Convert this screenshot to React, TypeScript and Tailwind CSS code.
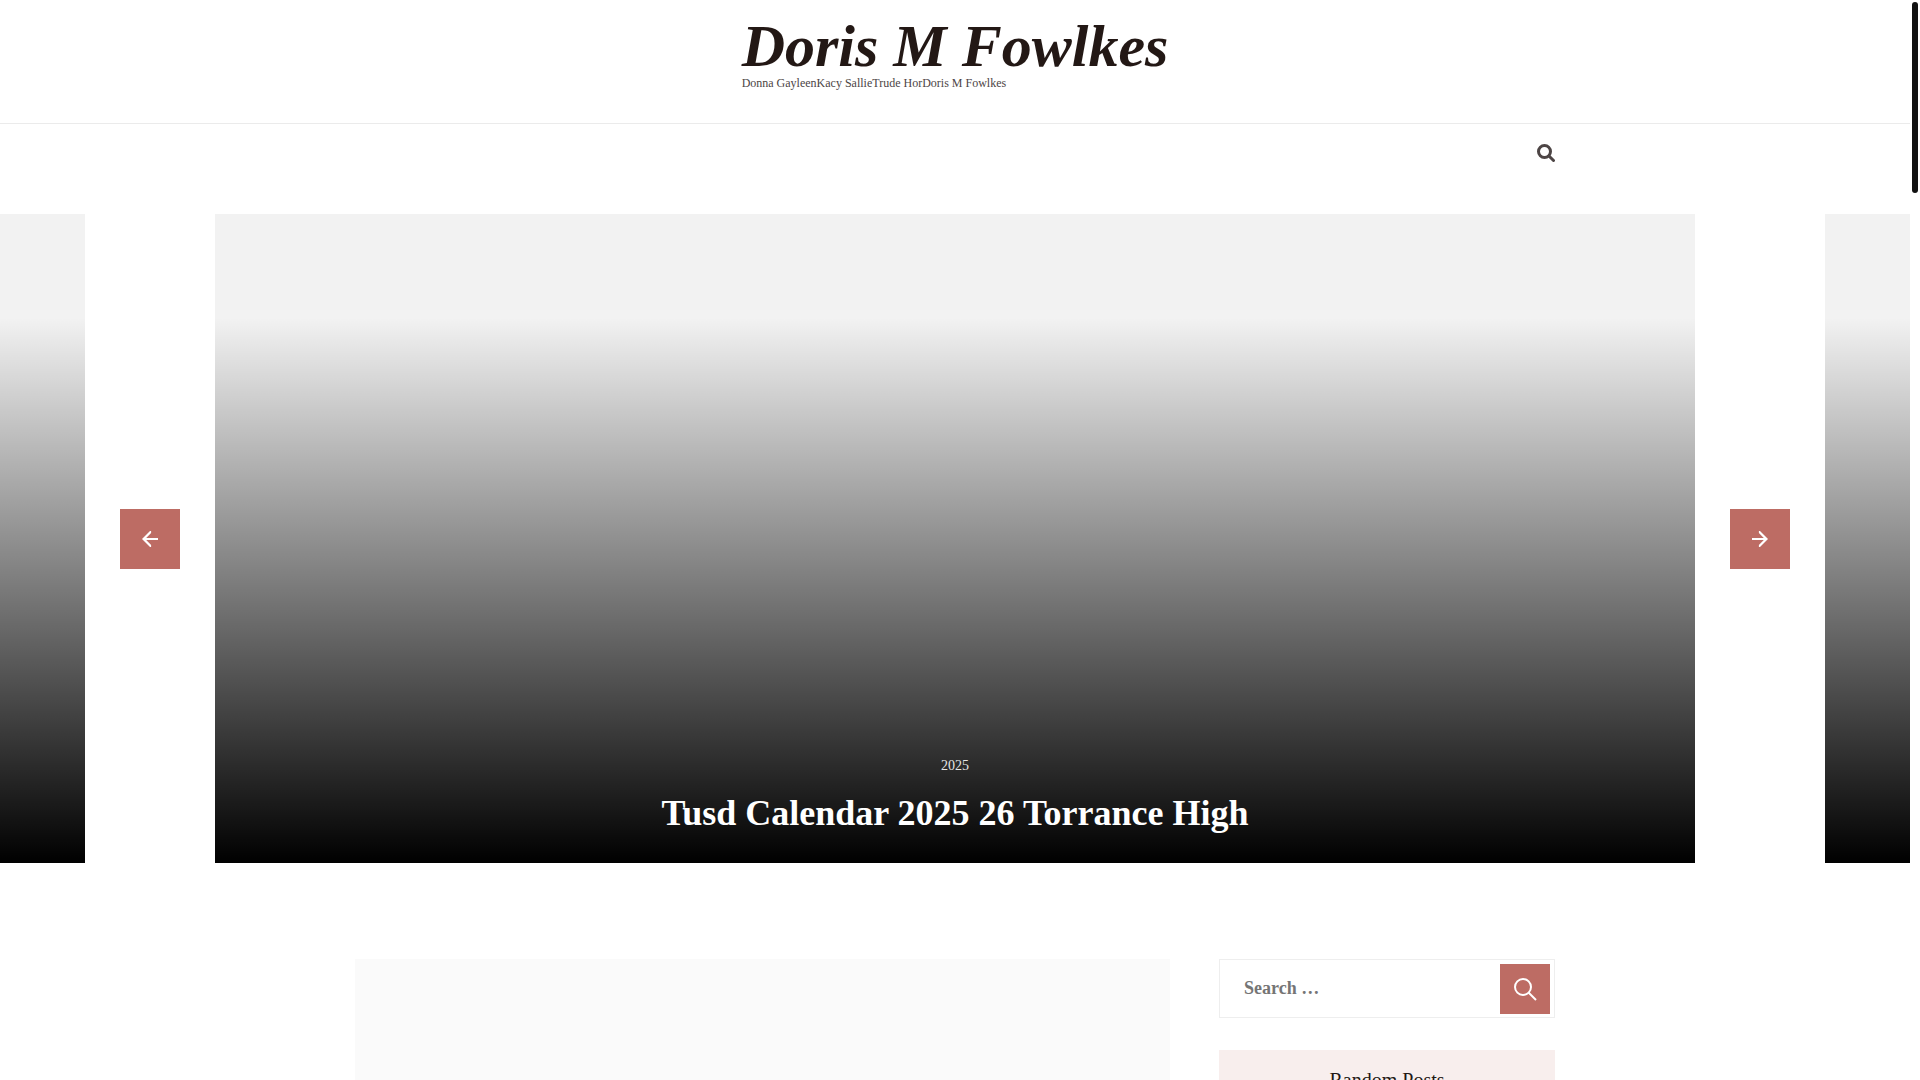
import { useState } from "react";

const slides = [
  { id: 1, category: "2025", title: "Calendar 2025 Printable Monthly" },
  { id: 2, category: "2025", title: "Tusd Calendar 2025 26 Torrance High" },
  { id: 3, category: "2025", title: "School Calendar 2025 Holidays" },
];

function SearchBoldIcon() {
  return (
    <svg width="18" height="18" viewBox="0 0 18 18" fill="none" stroke="currentColor" strokeWidth="3" aria-hidden="true">
      <circle cx="7.5" cy="7.5" r="6" />
      <path d="M12 12l4.5 4.5" strokeLinecap="round" />
    </svg>
  );
}

function SearchThinIcon() {
  return (
    <svg width="24" height="24" viewBox="0 0 24 24" fill="none" stroke="currentColor" strokeWidth="2" aria-hidden="true">
      <circle cx="10" cy="10" r="8" />
      <path d="M15.5 15.5L23 23" />
    </svg>
  );
}

function ArrowIcon({ direction }: { direction: "left" | "right" }) {
  return (
    <svg width="16" height="16" viewBox="0 0 16 16" fill="currentColor" aria-hidden="true">
      {direction === "left" ? (
        <path d="M16 7H4.2l4.9-4.9V0H8L0 8l8 8h1.1v-2.1L4.2 9H16z" />
      ) : (
        <path d="M0 7h11.8L6.9 2.1V0H8l8 8-8 8H6.9v-2.1L11.8 9H0z" />
      )}
    </svg>
  );
}

function Header() {
  return (
    <header>
      <div className="flex justify-center border-b border-[#ebebeb] pt-4 pb-8">
        <div>
          <h1 className="text-[60px] leading-[60px] font-bold italic">
            <a href="#home">Doris M Fowlkes</a>
          </h1>
          <p className="text-xs leading-[15px] text-[#4d4545]">Donna GayleenKacy SallieTrude HorDoris M Fowlkes</p>
        </div>
      </div>
      <nav className="mx-auto flex h-[90px] max-w-[1200px] items-start justify-end pt-5">
        <button type="button" aria-label="Open search" className="text-[#4d4545]">
          <SearchBoldIcon />
        </button>
      </nav>
    </header>
  );
}

function Slider() {
  const [active, setActive] = useState(1);
  const at = (offset: number) => slides[(active + offset + slides.length) % slides.length];
  const visible = [at(-1), at(0), at(1)];

  return (
    <section aria-label="Featured posts" className="relative overflow-hidden">
      <div className="flex justify-center gap-[130px]">
        {visible.map((slide, index) => (
          <article
            key={slide.id}
            className="flex h-[649px] w-[calc(100%-430px)] shrink-0 flex-col items-center justify-end bg-[#f2f2f2] bg-[linear-gradient(180deg,rgba(0,0,0,0)_16%,#000_100%)] pb-6 text-center text-white"
          >
            {index === 1 && (
              <>
                <a href="#category" className="text-sm leading-5 text-[#e6e6e6]">{slide.category}</a>
                <h2 className="mt-[11px] text-4xl leading-[52px] font-bold">
                  <a href="#post">{slide.title}</a>
                </h2>
              </>
            )}
          </article>
        ))}
      </div>
      <button
        type="button"
        aria-label="Previous slide"
        onClick={() => setActive((active + 2) % 3)}
        className="absolute top-[295px] left-[120px] flex size-[60px] items-center justify-center bg-[#bd6c64] text-white"
      >
        <ArrowIcon direction="left" />
      </button>
      <button
        type="button"
        aria-label="Next slide"
        onClick={() => setActive((active + 1) % 3)}
        className="absolute top-[295px] right-[120px] flex size-[60px] items-center justify-center bg-[#bd6c64] text-white"
      >
        <ArrowIcon direction="right" />
      </button>
    </section>
  );
}

function Sidebar() {
  return (
    <aside className="w-[336px] shrink-0">
      <form role="search" className="flex items-start border border-[#eeeeee] px-1 pt-1 pb-[3px]" onSubmit={(e) => e.preventDefault()}>
        <input
          type="search"
          aria-label="Search for"
          placeholder="Search …"
          className="h-[49px] min-w-0 flex-1 bg-transparent pl-5 text-lg font-bold outline-none placeholder:text-[#757575]"
        />
        <button type="submit" aria-label="Search" className="flex size-[50px] items-center justify-center bg-[#bd6c64] text-white">
          <SearchThinIcon />
        </button>
      </form>
      <section className="mt-8">
        <h2 className="bg-[#f8eeed] py-4 text-center text-xl leading-7">Random Posts</h2>
      </section>
    </aside>
  );
}

export default function App() {
  return (
    <div className="relative h-screen overflow-hidden bg-white pr-[10px] font-['Liberation_Serif',serif] text-[#231815]">
      <Header />
      <Slider />
      <main className="mx-auto mt-24 flex max-w-[1200px] items-start gap-[49px]">
        <article className="h-[520px] flex-1 bg-[#fafafa]" />
        <Sidebar />
      </main>
      <div className="absolute top-[2px] right-[2px] h-[191px] w-[6px] rounded-full bg-[#111111]" />
    </div>
  );
}
